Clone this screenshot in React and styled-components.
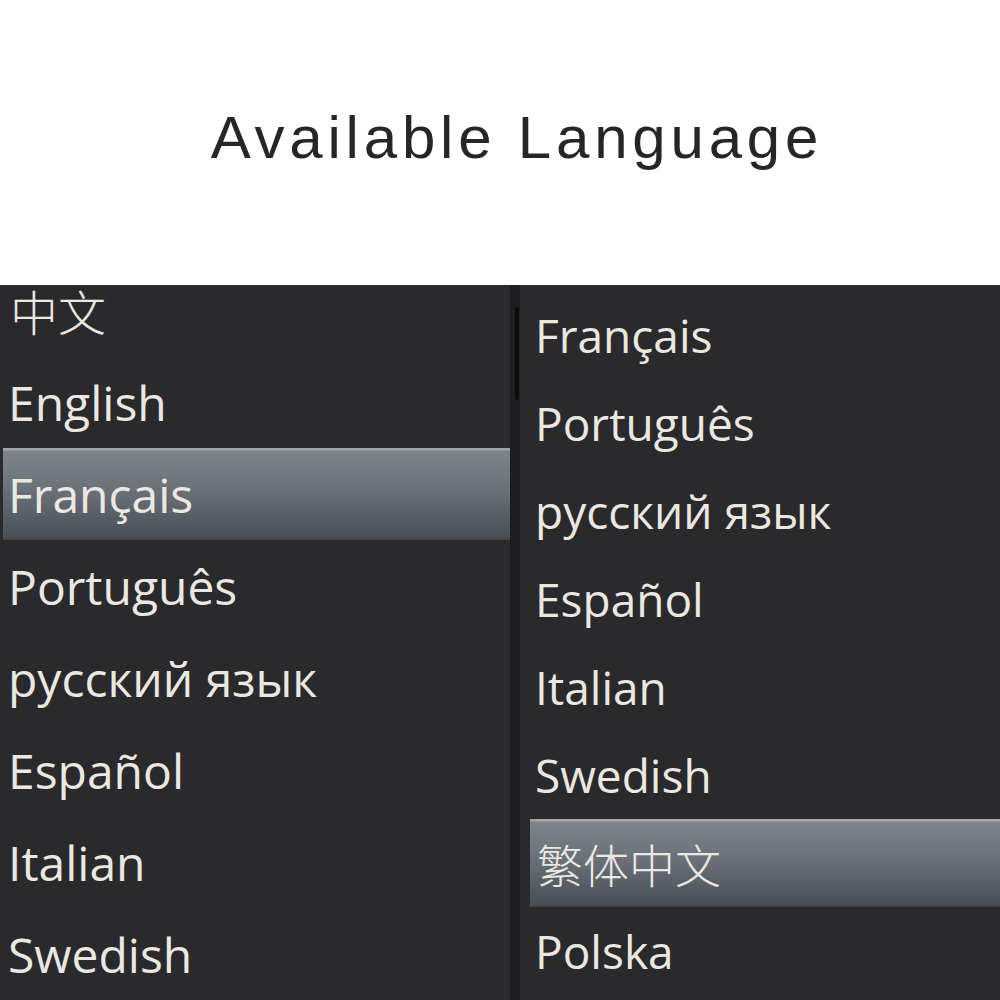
import React from "react";
import styled, { createGlobalStyle } from "styled-components";

const GlobalStyle = createGlobalStyle`
  html, body { margin: 0; padding: 0; background: #ffffff; }
  * { box-sizing: border-box; }
`;

const Page = styled.div`
  width: 1000px;
  height: 1000px;
  display: flex;
  flex-direction: column;
  overflow: hidden;
`;

const Header = styled.header`
  height: 285px;
  display: flex;
  align-items: center;
  justify-content: center;
  padding: 0 0 10px 34px;
`;

const Title = styled.h1`
  margin: 0;
  font-family: "Liberation Sans", Arial, sans-serif;
  font-weight: 400;
  font-size: 60px;
  line-height: 1;
  letter-spacing: 4.8px;
  color: #262626;
`;

const Panels = styled.div`
  flex: 1;
  display: flex;
  background: #2a2a2c;
  overflow: hidden;
`;

const Pane = styled.div`
  width: ${(p) => p.$width};
  flex: ${(p) => (p.$grow ? 1 : "none")};
  overflow: hidden;
  padding: ${(p) => p.$pad};
`;

const List = styled.ul`
  list-style: none;
  margin: ${(p) => p.$offset}px 0 0 0;
  padding: 0;
`;

const Item = styled.li`
  height: ${(p) => p.$h}px;
  display: flex;
  align-items: center;
  padding-left: 5px;
  font-family: "Open Sans", "Noto Sans", "Noto Sans CJK SC", sans-serif;
  font-size: ${(p) => p.$size}px;
  color: #ebe8e2;
  white-space: nowrap;
  background: ${(p) =>
    p.$selected
      ? "linear-gradient(to bottom, #a2a6ab 0px, #a2a6ab 2px, #7e848c 3px, #6b7179 45%, #4a5058 96%, #3e434a 100%)"
      : "transparent"};
`;

const Cjk = styled.span`
  font-family: "Noto Sans CJK SC", sans-serif;
  font-weight: 300;
  padding-left: 2px;
`;

const Divider = styled.div`
  width: 10px;
  flex: none;
  background: #1f1f21;
  display: flex;
  justify-content: flex-end;
  padding-top: 22px;
  border-left: 1px solid #19191a;
`;

const Thumb = styled.div`
  width: 4px;
  height: 93px;
  border-radius: 2px;
  background: #0c0c0d;
  margin-right: 1px;
`;

const left = [
  { t: "中文", cjk: true },
  { t: "English" },
  { t: "Français", sel: true },
  { t: "Português" },
  { t: "русский язык" },
  { t: "Español" },
  { t: "Italian" },
  { t: "Swedish" },
];

const right = [
  { t: "Français" },
  { t: "Português" },
  { t: "русский язык" },
  { t: "Español" },
  { t: "Italian" },
  { t: "Swedish" },
  { t: "繁体中文", cjk: true, sel: true },
  { t: "Polska" },
];

const renderItems = (items, h, size) =>
  items.map((it, i) => (
    <Item key={i} $h={h} $size={size} $selected={it.sel}>
      {it.cjk ? <Cjk>{it.t}</Cjk> : it.t}
    </Item>
  ));

export default function App() {
  return (
    <Page>
      <GlobalStyle />
      <Header>
        <Title>Available Language</Title>
      </Header>
      <Panels>
        <Pane $width="510px" $pad="0 0 0 3px">
          <List $offset={-21}>{renderItems(left, 92, 48)}</List>
        </Pane>
        <Divider>
          <Thumb />
        </Divider>
        <Pane $grow $pad="6px 0 0 10px">
          <List $offset={0}>{renderItems(right, 88, 46)}</List>
        </Pane>
      </Panels>
    </Page>
  );
}
